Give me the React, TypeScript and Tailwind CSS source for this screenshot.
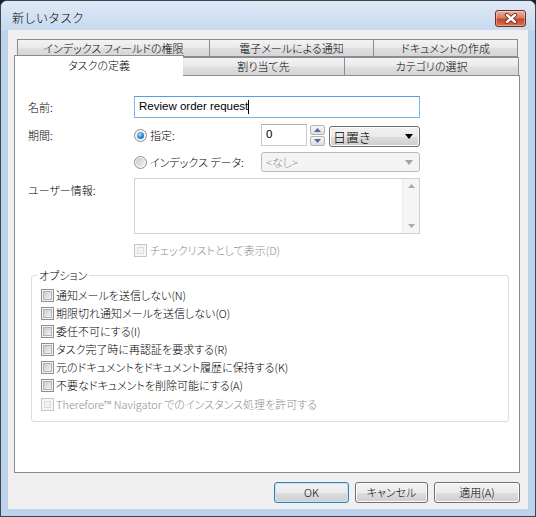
import React from "react";

function CloseButton() {
  return (
    <div className="ml-auto mt-[9px] w-[31px] h-[17px] rounded-[3px] border border-[#6d2b22] bg-[linear-gradient(#eab2a4,#d97b63_45%,#c2452c_55%,#d9734f)] shadow-[inset_0_0_0_1px_rgba(255,255,255,0.35)] flex items-center justify-center">
      <svg width="14" height="11" viewBox="0 0 14 11">
        <path d="M3 2 L11 9 M11 2 L3 9" stroke="#6a2a20" strokeWidth="4.2" strokeLinecap="round" />
        <path d="M3 2 L11 9 M11 2 L3 9" stroke="#ffffff" strokeWidth="2.4" strokeLinecap="round" />
      </svg>
    </div>
  );
}

function Check({ disabled }: { disabled?: boolean }) {
  return disabled ? (
    <span className="w-[13px] h-[13px] shrink-0 border border-[#c6c6c6] bg-[#f7f7f7] p-[2px] flex">
      <span className="flex-1 border border-[#dcdcdc] bg-[#f2f2f2]" />
    </span>
  ) : (
    <span className="w-[13px] h-[13px] shrink-0 border border-[#8e8f8f] bg-[#f4f4f4] p-[1px] flex">
      <span className="flex-1 border border-[#aeb3b9] bg-gradient-to-br from-[#c7cbd1] to-[#f4f4f4]" />
    </span>
  );
}

function Radio({ checked }: { checked?: boolean }) {
  return (
    <span className="w-[13px] h-[13px] shrink-0 rounded-full border border-[#8e8f8f] bg-[#f4f4f4] flex items-center justify-center">
      {checked ? (
        <span className="w-[7px] h-[7px] rounded-full bg-[radial-gradient(circle_at_40%_35%,#a6dcff,#2a86d6_55%,#0c4f9c)]" />
      ) : (
        <span className="w-[9px] h-[9px] rounded-full bg-gradient-to-br from-[#c4c7cc] to-[#f6f6f6]" />
      )}
    </span>
  );
}

function Tab({ label, w, shift }: { label: string; w: string; shift?: boolean }) {
  return (
    <div
      className={`${w} ${shift ? "-ml-px" : ""} h-full border border-[#898c95] bg-[linear-gradient(#f3f3f3,#ebebeb_45%,#dedede_55%,#d6d6d6)] flex items-center justify-center`}
    >
      {label}
    </div>
  );
}

function Button({ label, w, isDefault }: { label: string; w: string; isDefault?: boolean }) {
  return (
    <div
      className={`${w} h-[21px] rounded-[3px] border ${
        isDefault
          ? "border-[#3c7fb1] shadow-[inset_0_0_0_1px_#bde6fa]"
          : "border-[#707070] shadow-[inset_0_0_0_1px_#fcfcfc]"
      } bg-[linear-gradient(#f2f2f2,#ebebeb_50%,#dddddd_51%,#cfcfcf)] flex items-center justify-center`}
    >
      {label}
    </div>
  );
}

const options = [
  "通知メールを送信しない(N)",
  "期限切れ通知メールを送信しない(O)",
  "委任不可にする(I)",
  "タスク完了時に再認証を要求する(R)",
  "元のドキュメントをドキュメント履歴に保持する(K)",
  "不要なドキュメントを削除可能にする(A)",
];

export default function App() {
  return (
    <div className="w-[536px] h-[517px] bg-[#1f1f1f] font-['Noto_Sans_CJK_JP',sans-serif] font-light [font-feature-settings:'palt'] text-[11px] leading-none text-black">
      <div className="w-full h-full flex flex-col rounded-t-[7px] border border-[#3d4651] bg-[#bdd3eb]">
        {/* title bar */}
        <div className="h-[29px] shrink-0 flex items-start rounded-t-[6px] bg-[linear-gradient(#dee9f6,#c7daef)] pl-[11px] pr-[9px]">
          <span className="mt-[11px] text-[12px] [font-feature-settings:normal]">新しいタスク</span>
          <CloseButton />
        </div>

        {/* client area */}
        <div className="flex-1 mx-[7px] mb-[7px] bg-[#f0f0f0] flex flex-col pl-[6px] pt-[9px]">
          {/* tab rows */}
          <div className="flex h-[18px] ml-[3px]">
            <Tab label="インデックス フィールドの権限" w="w-[193px]" />
            <Tab label="電子メールによる通知" w="w-[165px]" shift />
            <Tab label="ドキュメントの作成" w="w-[145px]" shift />
          </div>
          <div className="flex items-end h-[20px] -mt-[2px] relative z-10">
            <div className="w-[170px] h-[21px] -mb-px border-x border-t border-[#898c95] bg-white flex justify-center pt-[4px]">
              タスクの定義
            </div>
            <div className="-ml-px w-[162px] h-[18px] border-t border-r border-[#898c95] bg-[linear-gradient(#f3f3f3,#ebebeb_45%,#dedede_55%,#d6d6d6)] flex items-center justify-center">
              割り当て先
            </div>
            <div className="w-[174px] h-[18px] border-t border-r border-[#898c95] bg-[linear-gradient(#f3f3f3,#ebebeb_45%,#dedede_55%,#d6d6d6)] flex items-center justify-center">
              カテゴリの選択
            </div>
          </div>

          {/* tab page */}
          <div className="w-[506px] h-[398px] border border-[#898c95] bg-white flex flex-col pl-[13px]">
            <div className="mt-[20px] flex items-center h-[22px]">
              <span className="w-[106px]">名前:</span>
              <div className="w-[286px] h-[22px] border border-[#7eb4ea] border-t-[#569de5] flex items-center pl-[4px] font-['Liberation_Sans',sans-serif] font-normal text-[11.5px]">
                <span>Review order request</span>
                <span className="w-px h-[14px] bg-black" />
              </div>
            </div>

            <div className="mt-[6px] flex items-center h-[22px]">
              <span className="w-[106px]">期間:</span>
              <div className="w-[127px] flex items-center gap-[3px]">
                <Radio checked />
                <span>指定:</span>
              </div>
              <div className="w-[46px] h-[22px] border border-[#c9cbcf] border-t-[#abadb3] flex items-center pl-[4px] font-['Liberation_Sans',sans-serif] font-normal text-[11.5px]">
                0
              </div>
              <div className="ml-[3px] flex flex-col gap-[1px]">
                <div className="w-[15px] h-[10px] border border-[#b4b4b4] rounded-[2px] bg-[linear-gradient(#f6f6f6,#dedede)] flex items-center justify-center">
                  <svg width="7" height="4" viewBox="0 0 7 4">
                    <path d="M0 4 L3.5 0 L7 4Z" fill="#4d6a99" />
                  </svg>
                </div>
                <div className="w-[15px] h-[10px] border border-[#b4b4b4] rounded-[2px] bg-[linear-gradient(#f6f6f6,#dedede)] flex items-center justify-center">
                  <svg width="7" height="4" viewBox="0 0 7 4">
                    <path d="M0 0 L3.5 4 L7 0Z" fill="#4d6a99" />
                  </svg>
                </div>
              </div>
              <div className="ml-[4px] mt-[2px] w-[91px] h-[21px] rounded-[3px] border border-[#707070] shadow-[inset_0_0_0_1px_#fcfcfc] bg-[linear-gradient(#f2f2f2,#ebebeb_50%,#dddddd_51%,#cfcfcf)] flex items-center pl-[3px] pr-[6px] text-[13px]">
                <span>日置き</span>
                <svg className="ml-auto" width="8" height="5" viewBox="0 0 8 5">
                  <path d="M0 0 L8 0 L4 5Z" fill="#000" />
                </svg>
              </div>
            </div>

            <div className="mt-[6px] flex items-center h-[20px]">
              <span className="w-[106px]" />
              <div className="w-[127px] flex items-center gap-[3px]">
                <Radio />
                <span>インデックス データ:</span>
              </div>
              <div className="w-[159px] h-[20px] rounded-[3px] border border-[#b7bbbf] bg-[#f4f4f4] flex items-center pl-[4px] pr-[6px] text-[#8d8d8d]">
                <span>&lt;なし&gt;</span>
                <svg className="ml-auto" width="8" height="5" viewBox="0 0 8 5">
                  <path d="M0 0 L8 0 L4 5Z" fill="#a3a3a3" />
                </svg>
              </div>
            </div>

            <div className="mt-[6px] flex items-start">
              <span className="w-[106px] pt-[7px]">ユーザー情報:</span>
              <div className="w-[286px] h-[56px] border border-[#cdd0d5] flex">
                <div className="flex-1" />
                <div className="w-[17px] bg-[#f5f5f5] border-l border-[#ececec] flex flex-col items-center justify-between py-[5px]">
                  <svg width="7" height="4" viewBox="0 0 7 4">
                    <path d="M0 4 L3.5 0 L7 4Z" fill="#a9a9a9" />
                  </svg>
                  <svg width="7" height="4" viewBox="0 0 7 4">
                    <path d="M0 0 L3.5 4 L7 0Z" fill="#a9a9a9" />
                  </svg>
                </div>
              </div>
            </div>

            <div className="mt-[10px] ml-[106px] flex items-center gap-[3px] h-[13px] text-[#8d8d8d]">
              <Check disabled />
              <span>チェックリストとして表示(D)</span>
            </div>

            <fieldset className="mt-[11px] ml-[3px] w-[478px] h-[154px] border border-[#d5dfe5] rounded-[3px] pl-[9px] pt-[4px]">
              <legend className="-ml-[4px] px-[2px] leading-[14px]">オプション</legend>
              {options.map((o) => (
                <div key={o} className="h-[18px] flex items-center gap-[2px]">
                  <Check />
                  <span>{o}</span>
                </div>
              ))}
              <div className="mt-[1px] h-[18px] flex items-center gap-[2px] text-[#8d8d8d]">
                <Check disabled />
                <span>Therefore™ Navigator でのインスタンス処理を許可する</span>
              </div>
            </fieldset>
          </div>

          {/* dialog buttons */}
          <div className="w-[506px] mt-[9px] flex justify-end gap-[6px]">
            <Button label="OK" w="w-[75px]" isDefault />
            <Button label="キャンセル" w="w-[73px]" />
            <Button label="適用(A)" w="w-[86px]" />
          </div>
        </div>
      </div>
    </div>
  );
}
